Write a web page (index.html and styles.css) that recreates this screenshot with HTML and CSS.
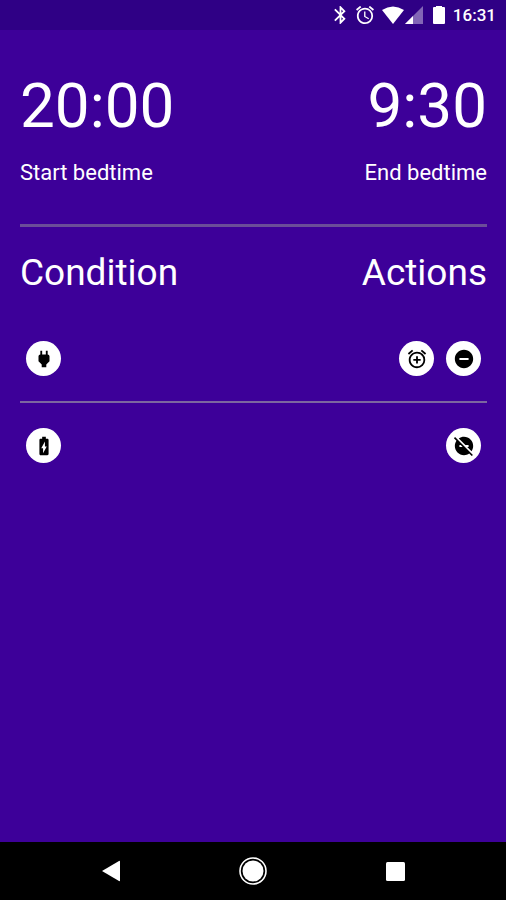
FILE: index.html
```html
<!DOCTYPE html>
<html lang="en">
<head>
  <meta charset="UTF-8" />
  <meta name="viewport" content="width=device-width, initial-scale=1.0" />
  <title>Bedtime</title>
  <link rel="stylesheet" href="styles.css">
</head>
<body>
  <header class="status-bar">
    <svg class="bluetooth" viewBox="5 2 14 20"><path d="M17.71 7.71L12 2h-1v7.59L6.41 5 5 6.41 10.59 12 5 17.59 6.41 19 11 14.41V22h1l5.71-5.71-4.3-4.29 4.3-4.29zM13 5.83l1.88 1.88L13 9.59V5.83zm1.88 10.46L13 18.17v-3.76l1.88 1.88z"/></svg>
    <svg class="alarm" viewBox="2 2 20 20"><path d="M22 5.72l-4.6-3.86-1.29 1.53 4.6 3.86L22 5.72zM7.88 3.39L6.6 1.86 2 5.71l1.29 1.53 4.59-3.85zM12.5 8H11v6l4.75 2.85.75-1.23-4-2.37V8zM12 4c-4.97 0-9 4.03-9 9s4.02 9 9 9a9 9 0 000-18zm0 16c-3.87 0-7-3.13-7-7s3.13-7 7-7 7 3.13 7 7-3.13 7-7 7z"/></svg>
    <svg class="wifi" viewBox="0 0 22 18"><path d="M11 18L0 4Q11-3 22 4z"/></svg>
    <svg class="signal" viewBox="0 0 18 18"><path d="M0 18L18 0v18z" opacity=".4"/><path d="M0 18l8-8v8z"/></svg>
    <svg class="battery" viewBox="0 0 12 18"><path d="M3 0h6v1h2q1 0 1 1v15q0 1-1 1H1q-1 0-1-1V2q0-1 1-1h2z"/></svg>
    <span class="clock">16:31</span>
  </header>

  <main class="content">
    <section class="bedtime">
      <button class="time-button">
        <span class="time">20:00</span>
        <span class="label">Start bedtime</span>
      </button>
      <button class="time-button end">
        <span class="time">9:30</span>
        <span class="label">End bedtime</span>
      </button>
    </section>

    <section class="rules">
      <div class="rules-header">
        <h2>Condition</h2>
        <h2>Actions</h2>
      </div>

      <div class="rule">
        <button class="round-icon" aria-label="Charging">
          <svg viewBox="0 0 24 24"><path d="M16.010 7L16 3h-2v4h-4V3H8v4h-.01C7 6.990 6 7.990 6 8.990v5.490L9.500 18v3h5v-3l3.500-3.510v-5.500c0-1-1-2-1.990-1.990z"/></svg>
        </button>
        <div class="actions">
          <button class="round-icon" aria-label="Set alarm">
            <svg viewBox="0 0 24 24"><path d="M7.880 3.390L6.600 1.860 2 5.710l1.290 1.530 4.590-3.850zM22 5.720l-4.600-3.860-1.290 1.530 4.600 3.860L22 5.720zM12 4c-4.970 0-9 4.030-9 9s4.020 9 9 9a9 9 0 000-18zm0 16c-3.870 0-7-3.130-7-7s3.130-7 7-7 7 3.130 7 7-3.130 7-7 7zm1-11h-2v3H8v2h3v3h2v-3h3v-2h-3V9z"/></svg>
          </button>
          <button class="round-icon" aria-label="Do not disturb on">
            <svg viewBox="0 0 24 24"><path d="M12 2C6.480 2 2 6.480 2 12s4.480 10 10 10 10-4.480 10-10S17.520 2 12 2zm5 11H7v-2h10v2z"/></svg>
          </button>
        </div>
      </div>

      <div class="rule">
        <button class="round-icon" aria-label="Battery charged">
          <svg viewBox="0 0 24 24"><path d="M15.670 4H14V2h-4v2H8.330C7.600 4 7 4.600 7 5.330v15.330C7 21.400 7.600 22 8.330 22h7.330c.74 0 1.340-.6 1.340-1.330V5.330C17 4.600 16.400 4 15.670 4zM11 20v-5.500H9L13 7v5.500h2L11 20z"/></svg>
        </button>
        <div class="actions">
          <button class="round-icon" aria-label="Do not disturb off">
            <svg viewBox="0 0 24 24"><path d="M17 11v2h-1.460l4.680 4.680C21.340 16.070 22 14.110 22 12c0-5.520-4.480-10-10-10-2.110 0-4.070.66-5.680 1.780L13.540 11H17zM2.270 2.270L1 3.540l2.780 2.780C2.660 7.930 2 9.890 2 12c0 5.520 4.480 10 10 10 2.110 0 4.070-.66 5.680-1.780L20.460 23l1.270-1.270L2.270 2.270zM7 13v-2h1.460l2 2H7z"/></svg>
          </button>
        </div>
      </div>
    </section>
  </main>

  <nav class="nav-bar">
    <button aria-label="Back"><svg viewBox="0 0 28 28"><path d="M5 14L22 4q1-.5 1 .5v19q0 1-1 .5z"/></svg></button>
    <button aria-label="Home"><svg viewBox="0 0 28 28"><circle cx="14" cy="14" r="10.500"/><circle cx="14" cy="14" r="13" fill="none" stroke="#fff" stroke-width="1.600"/></svg></button>
    <button aria-label="Recent apps"><svg viewBox="0 0 28 28"><rect x="5" y="5" width="19" height="19" rx="1.500"/></svg></button>
  </nav>
</body>
</html>
```

FILE: styles.css
```css
* {
  margin: 0;
  padding: 0;
  box-sizing: border-box;
}

body {
  font-family: Roboto, "Noto Sans", sans-serif;
  color: #ffffff;
  background: #3d0099;
  min-height: 100vh;
  display: flex;
  flex-direction: column;
}

button {
  background: none;
  border: none;
  color: inherit;
  font: inherit;
  cursor: pointer;
}

svg {
  display: block;
  fill: currentColor;
}

.status-bar {
  display: flex;
  align-items: center;
  justify-content: flex-end;
  height: 30px;
  padding: 0 10px;
  background: #2f0085;
}

.status-bar svg {
  height: 18px;
}

.bluetooth {
  width: 13px;
  margin-right: 9px;
}

.alarm {
  width: 18px;
  margin-right: 8px;
}

.wifi {
  width: 22px;
  margin-right: 1px;
}

.signal {
  width: 18px;
  margin-right: 10px;
}

.battery {
  width: 12px;
  margin-right: 8px;
}

.clock {
  font-size: 17px;
  font-weight: 500;
  line-height: 30px;
}

.content {
  flex: 1;
  padding: 40px 19px 0 20px;
}

.bedtime {
  display: flex;
  justify-content: space-between;
  padding-bottom: 37px;
  border-bottom: 3px solid #6b4d99;
}

.time-button {
  display: flex;
  flex-direction: column;
  text-align: left;
}

.end {
  text-align: right;
}

.time,
.label {
  display: block;
  width: 100%;
}

.time {
  font-size: 62px;
  line-height: 72px;
}

.label {
  margin-top: 17px;
  font-size: 22px;
  line-height: 28px;
}

.rules-header {
  display: flex;
  justify-content: space-between;
  padding: 24px 0 21px;
}

.rules-header h2 {
  font-size: 37px;
  font-weight: 400;
  line-height: 44px;
}

.rule {
  display: flex;
  justify-content: space-between;
  padding: 25px 6px;
}

.rule:nth-child(2) {
  border-bottom: 2px solid #7c66a0;
}

.actions {
  display: flex;
  gap: 12px;
}

.round-icon {
  display: flex;
  align-items: center;
  justify-content: center;
  width: 35px;
  height: 35px;
  border-radius: 50%;
  background: #ffffff;
  color: #000000;
}

.round-icon svg {
  width: 22px;
  height: 22px;
}

.nav-bar {
  display: grid;
  grid-template-columns: repeat(3, 1fr);
  height: 58px;
  padding: 0 40px;
  background: #000000;
}

.nav-bar button {
  display: flex;
  align-items: center;
  justify-content: center;
}

.nav-bar svg {
  width: 28px;
  height: 28px;
}
```
